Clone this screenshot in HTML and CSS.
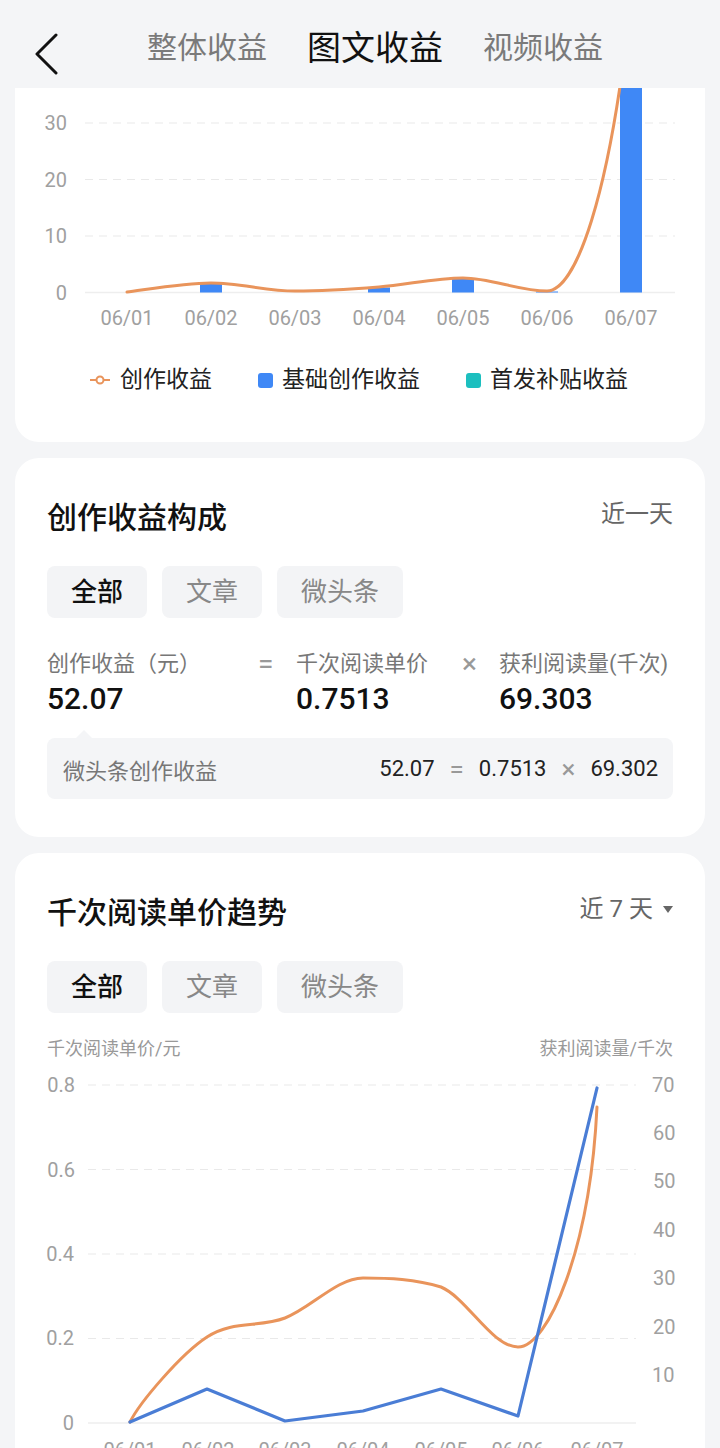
FILE: index.html
```html
<!DOCTYPE html>
<html lang="zh-CN">
<head>
    <meta charset="UTF-8">
    <meta name="viewport" content="width=device-width, initial-scale=1.0">
    <link rel="stylesheet" href="styles.css">
    <title>图文收益</title>
</head>
<body>
    <div class="topbar">
        <svg class="back" viewBox="0 0 24 42">
            <path d="M22 2 L3 21 L22 40" />
        </svg>
        <div class="tabs">
            <span class="tab">整体收益</span>
            <span class="tab active">图文收益</span>
            <span class="tab">视频收益</span>
        </div>
    </div>

    <div class="card card-first">
        <svg class="chart-top" width="690" height="252" viewBox="15 88 690 252">
            <line class="grid" x1="85" y1="123" x2="675" y2="123" />
            <line class="grid" x1="85" y1="179.5" x2="675" y2="179.5" />
            <line class="grid" x1="85" y1="236" x2="675" y2="236" />
            <line class="axis" x1="85" y1="292.5" x2="675" y2="292.5" />

            <text class="lbl" x="67" y="130" text-anchor="end">30</text>
            <text class="lbl" x="67" y="187" text-anchor="end">20</text>
            <text class="lbl" x="67" y="243" text-anchor="end">10</text>
            <text class="lbl" x="67" y="300" text-anchor="end">0</text>

            <rect class="bar" x="200" y="283" width="22" height="9.5" />
            <rect class="bar" x="368" y="287.5" width="22" height="5" />
            <rect class="bar" x="452" y="279" width="22" height="13.5" />
            <rect class="bar" x="536" y="291.5" width="22" height="1" />
            <rect class="bar" x="620" y="0" width="22" height="292.5" />

            <path class="line-orange" d="M127 292 C141 290.5 183 283 211 283 C239 283 267 291 295 291 C323 291 351 289.2 379 287 C407 284.8 435 278 463 278 C491 278 519 291 547 291 C575 291 610 200 631 -2" />

            <text class="lbl" x="127" y="325" text-anchor="middle">06/01</text>
            <text class="lbl" x="211" y="325" text-anchor="middle">06/02</text>
            <text class="lbl" x="295" y="325" text-anchor="middle">06/03</text>
            <text class="lbl" x="379" y="325" text-anchor="middle">06/04</text>
            <text class="lbl" x="463" y="325" text-anchor="middle">06/05</text>
            <text class="lbl" x="547" y="325" text-anchor="middle">06/06</text>
            <text class="lbl" x="631" y="325" text-anchor="middle">06/07</text>
        </svg>

        <div class="legend">
            <div class="legend-item">
                <svg class="legend-line" viewBox="0 0 20 10">
                    <line x1="0" y1="5" x2="20" y2="5" />
                    <circle cx="10" cy="5" r="3.5" />
                </svg>
                <span>创作收益</span>
            </div>
            <div class="legend-item">
                <i class="legend-box blue"></i>
                <span>基础创作收益</span>
            </div>
            <div class="legend-item">
                <i class="legend-box teal"></i>
                <span>首发补贴收益</span>
            </div>
        </div>
    </div>

    <div class="card">
        <div class="card-head">
            <h2 class="card-title">创作收益构成</h2>
            <span class="range">近一天</span>
        </div>
        <div class="chips">
            <span class="chip on">全部</span>
            <span class="chip">文章</span>
            <span class="chip">微头条</span>
        </div>

        <div class="formula">
            <span class="f-label">创作收益（元）</span>
            <span class="f-op">=</span>
            <span class="f-label">千次阅读单价</span>
            <span class="f-op">×</span>
            <span class="f-label">获利阅读量(千次)</span>
            <span class="f-value">52.07</span>
            <span></span>
            <span class="f-value">0.7513</span>
            <span></span>
            <span class="f-value">69.303</span>
        </div>

        <div class="sub">
            <span class="sub-label">微头条创作收益</span>
            <span class="sub-calc">
                <span>52.07</span>
                <span class="op">=</span>
                <span>0.7513</span>
                <span class="op">×</span>
                <span>69.302</span>
            </span>
        </div>
    </div>

    <div class="card card-last">
        <div class="card-head">
            <h2 class="card-title">千次阅读单价趋势</h2>
            <span class="range">近 7 天<i class="caret"></i></span>
        </div>
        <div class="chips">
            <span class="chip on">全部</span>
            <span class="chip">文章</span>
            <span class="chip">微头条</span>
        </div>

        <div class="axis-titles">
            <span>千次阅读单价/元</span>
            <span>获利阅读量/千次</span>
        </div>

        <svg class="chart-bottom" width="629" height="400" viewBox="46 1061 629 400">
            <line class="grid" x1="88" y1="1085" x2="636" y2="1085" />
            <line class="grid" x1="88" y1="1169.5" x2="636" y2="1169.5" />
            <line class="grid" x1="88" y1="1254" x2="636" y2="1254" />
            <line class="grid" x1="88" y1="1338.5" x2="636" y2="1338.5" />
            <line class="axis" x1="88" y1="1423" x2="636" y2="1423" />

            <text class="lbl" x="75" y="1092" text-anchor="end">0.8</text>
            <text class="lbl" x="75" y="1177" text-anchor="end">0.6</text>
            <text class="lbl" x="74" y="1261" text-anchor="end">0.4</text>
            <text class="lbl" x="74" y="1345" text-anchor="end">0.2</text>
            <text class="lbl" x="74" y="1430" text-anchor="end">0</text>

            <text class="lbl" x="652" y="1092">70</text>
            <text class="lbl" x="653" y="1140">60</text>
            <text class="lbl" x="653" y="1188">50</text>
            <text class="lbl" x="653" y="1237">40</text>
            <text class="lbl" x="653" y="1285">30</text>
            <text class="lbl" x="653" y="1334">20</text>
            <text class="lbl" x="652" y="1382">10</text>

            <path class="line-orange" d="M130 1422 C140 1402 181 1354 207 1337 C233 1320 259 1328 285 1318 C311 1308 337 1278 363 1278 C389 1278 415 1279 441 1287 C467 1298 492 1347 518 1347 C548 1347 590 1250 597 1107" />
            <polyline class="line-blue" points="130,1422 207,1389 285,1421 363,1411 441,1389 518,1416 597,1088" />

            <text class="lbl" x="130" y="1457" text-anchor="middle">06/01</text>
            <text class="lbl" x="208" y="1457" text-anchor="middle">06/02</text>
            <text class="lbl" x="285" y="1457" text-anchor="middle">06/03</text>
            <text class="lbl" x="363" y="1457" text-anchor="middle">06/04</text>
            <text class="lbl" x="441" y="1457" text-anchor="middle">06/05</text>
            <text class="lbl" x="518" y="1457" text-anchor="middle">06/06</text>
            <text class="lbl" x="597" y="1457" text-anchor="middle">06/07</text>
        </svg>
    </div>
</body>
</html>
```

FILE: styles.css
```css
body {
    margin: 0;
    width: 720px;
    height: 1448px;
    overflow: hidden;
    background: #f4f5f7;
    font-family: Roboto, "Noto Sans CJK SC", sans-serif;
    color: #111;
}

.topbar {
    height: 88px;
    display: flex;
    align-items: flex-start;
}

.back {
    width: 24px;
    height: 42px;
    margin: 33px 0 0 34px;
}

.back path {
    fill: none;
    stroke: #111;
    stroke-width: 3;
    stroke-linecap: round;
    stroke-linejoin: round;
}

.tabs {
    display: flex;
    align-items: center;
    gap: 40px;
    margin: 28px 0 0 89px;
    height: 40px;
}

.tab {
    font-size: 30px;
    line-height: 40px;
    color: #7a7a7a;
}

.tab.active {
    font-size: 34px;
    color: #111;
}

.card {
    background: #fff;
    margin: 0 15px 16px;
    border-radius: 24px;
    padding: 40px 32px 38px;
}

.card-first {
    padding: 0;
    border-radius: 0 0 24px 24px;
}

.card-last {
    padding-bottom: 0;
    height: 600px;
}

.chart-top,
.chart-bottom {
    display: block;
}

.chart-bottom {
    margin-left: -1px;
}

.grid {
    stroke: #e9e9e9;
    stroke-width: 1;
    stroke-dasharray: 8 6;
}

.axis {
    stroke: #eeeeee;
    stroke-width: 1.5;
}

.lbl {
    font-family: Roboto, "Noto Sans CJK SC", sans-serif;
    font-size: 20px;
    fill: #a0a0a0;
}

.bar {
    fill: #3f88f6;
}

.line-orange {
    fill: none;
    stroke: #e9945b;
    stroke-width: 3;
    stroke-linecap: round;
}

.line-blue {
    fill: none;
    stroke: #4a7dd5;
    stroke-width: 3.2;
    stroke-linejoin: round;
    stroke-linecap: round;
}

.legend {
    display: flex;
    align-items: center;
    gap: 46px;
    height: 40px;
    margin-top: 20px;
    padding: 0 0 42px 75px;
}

.legend-item {
    display: flex;
    align-items: center;
    font-size: 23px;
    line-height: 40px;
    color: #222;
}

.legend-line {
    width: 20px;
    height: 10px;
    margin-right: 10px;
}

.legend-line line {
    stroke: #e9945b;
    stroke-width: 2;
}

.legend-line circle {
    fill: #fff;
    stroke: #e9945b;
    stroke-width: 2;
}

.legend-box {
    width: 15px;
    height: 15px;
    border-radius: 3px;
    margin-right: 9px;
}

.legend-box.blue {
    background: #3f88f6;
}

.legend-box.teal {
    background: #1cbfbf;
}

.card-head {
    display: flex;
    justify-content: space-between;
    align-items: flex-start;
}

.card-title {
    margin: 0;
    font-size: 30px;
    line-height: 40px;
    font-weight: 500;
    color: #111;
}

.range {
    font-size: 24px;
    line-height: 32px;
    color: #666;
    display: flex;
    align-items: center;
}

.caret {
    width: 0;
    height: 0;
    margin-left: 10px;
    border-left: 5px solid transparent;
    border-right: 5px solid transparent;
    border-top: 7px solid #666;
}

.chips {
    display: flex;
    gap: 15px;
    margin-top: 28px;
}

.chip {
    height: 52px;
    line-height: 52px;
    padding: 0 24px;
    border-radius: 8px;
    background: #f3f4f6;
    font-size: 26px;
    color: #888;
}

.chip.on {
    color: #111;
    font-weight: 500;
}

.formula {
    display: grid;
    grid-template-columns: 211px 38px 166px 37px 1fr;
    row-gap: 2px;
    margin-top: 31px;
}

.f-label {
    font-size: 22px;
    line-height: 30px;
    color: #777;
    white-space: nowrap;
}

.f-op {
    font-size: 28px;
    line-height: 30px;
    color: #999;
}

.f-value {
    font-size: 30px;
    line-height: 36px;
    font-weight: 500;
    color: #111;
}

.sub {
    position: relative;
    margin-top: 21px;
    height: 61px;
    background: #f4f5f7;
    border-radius: 8px;
    display: flex;
    align-items: center;
    justify-content: space-between;
    padding: 0 15px 0 16px;
}

.sub::before {
    content: "";
    position: absolute;
    left: 29px;
    top: -8px;
    border-left: 8px solid transparent;
    border-right: 8px solid transparent;
    border-bottom: 8px solid #f4f5f7;
}

.sub-label {
    font-size: 22px;
    color: #777;
}

.sub-calc {
    display: flex;
    align-items: center;
    gap: 15px;
    font-size: 22px;
    color: #222;
}

.sub-calc .op {
    font-size: 26px;
    color: #999;
}

.axis-titles {
    display: flex;
    justify-content: space-between;
    margin-top: 24px;
    font-size: 18px;
    line-height: 24px;
    color: #999;
}
```
